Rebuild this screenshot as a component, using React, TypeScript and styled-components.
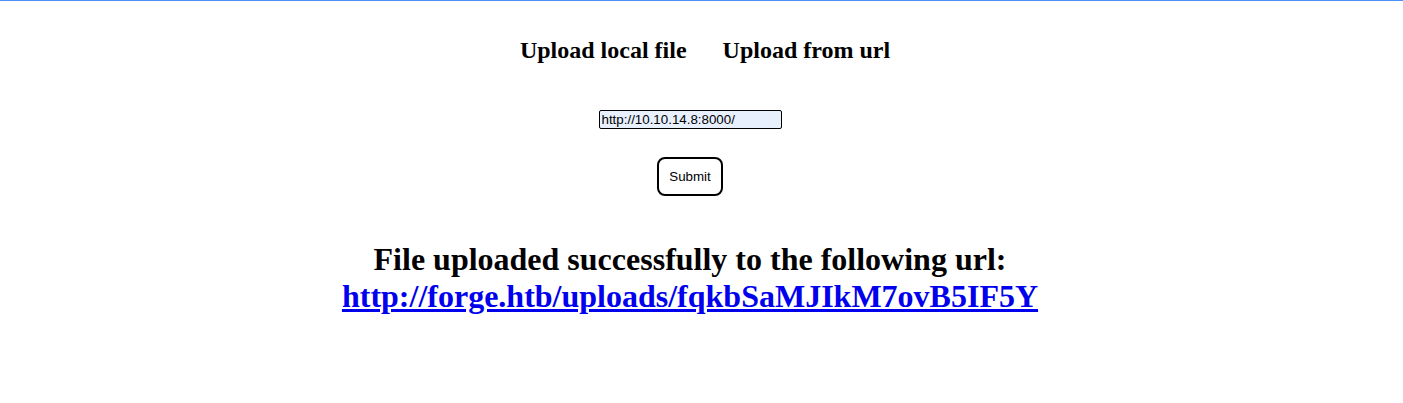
import React from "react";
import styled, { createGlobalStyle } from "styled-components";

const Global = createGlobalStyle`
  html, body { margin: 0; padding: 0; background: #fff; }
  body { font-family: "Liberation Serif", "Times New Roman", serif; color: #000; }
`;

const Frame = styled.div`
  border-top: 1px solid #4d8ff5;
`;

const Page = styled.div`
  width: 1380px;
  display: flex;
  flex-direction: column;
  align-items: center;
  padding-top: 35px;
`;

const Tabs = styled.nav`
  display: flex;
  gap: 36px;
  padding-left: 30px;
`;

const Tab = styled.h2`
  margin: 0;
  font-size: 24px;
  font-weight: bold;
  line-height: 28px;
  cursor: pointer;
`;

const Form = styled.form`
  display: flex;
  flex-direction: column;
  align-items: center;
  margin-top: 46px;
`;

const UrlInput = styled.input`
  box-sizing: border-box;
  width: 183px;
  height: 19px;
  padding: 1px 2px;
  border: 1px solid #000;
  border-radius: 2px;
  background: #e8f0fe;
  font-family: "Liberation Sans", Arial, sans-serif;
  font-size: 13.33px;
  color: #000;
  outline: none;
`;

const SubmitButton = styled.button`
  box-sizing: border-box;
  margin-top: 28px;
  width: 66px;
  height: 39px;
  border: 2px solid #000;
  border-radius: 8px;
  background: #fff;
  font-family: "Liberation Sans", Arial, sans-serif;
  font-size: 13.33px;
  color: #000;
  padding: 0;
`;

const Result = styled.h1`
  margin: 45px 0 0;
  font-size: 32px;
  font-weight: bold;
  line-height: 37px;
  text-align: center;
`;

const ResultLink = styled.a`
  color: #0000ee;
  text-decoration: underline;
`;

export default function App() {
  return (
    <>
      <Global />
      <Frame>
        <Page>
          <Tabs>
            <Tab>Upload local file</Tab>
            <Tab>Upload from url</Tab>
          </Tabs>
          <Form onSubmit={(e) => e.preventDefault()}>
            <UrlInput type="text" defaultValue="http://10.10.14.8:8000/" />
            <SubmitButton type="submit">Submit</SubmitButton>
          </Form>
          <Result>
            File uploaded successfully to the following url:
            <br />
            <ResultLink href="#">http://forge.htb/uploads/fqkbSaMJIkM7ovB5IF5Y</ResultLink>
          </Result>
        </Page>
      </Frame>
    </>
  );
}
